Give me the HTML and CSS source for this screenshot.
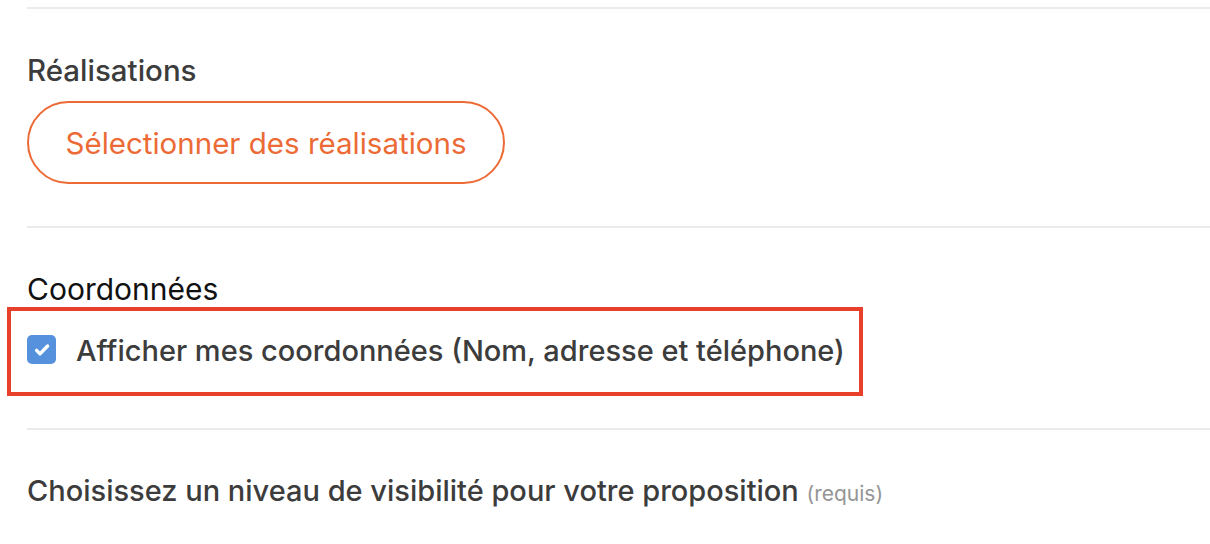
FILE: index.html
```html
<!DOCTYPE html>
<html lang="fr">
<head>
<meta charset="utf-8">
<link rel="stylesheet" href="styles.css">
</head>
<body>
<div class="form">
  <section class="section">
    <h2 class="title">Réalisations</h2>
    <button class="btn-outline" type="button">Sélectionner des réalisations</button>
  </section>
  <section class="section">
    <h2 class="title plain">Coordonnées</h2>
    <label class="check-row">
      <span class="checkbox">
        <svg viewBox="0 0 29 29" width="29" height="29"><path d="M9.6 15.4 L13 18.9 L20.6 11" fill="none" stroke="#fff" stroke-width="3.4" stroke-linecap="round" stroke-linejoin="round"/></svg>
      </span>
      <span class="check-label">Afficher mes coordonnées (Nom, adresse et téléphone)</span>
    </label>
  </section>
  <section class="section last">
    <h2 class="title">Choisissez un niveau de visibilité pour votre proposition <span class="req">(requis)</span></h2>
  </section>
</div>
</body>
</html>
```
FILE: styles.css
```css
*, *::before, *::after { box-sizing: border-box; }
html, body { margin: 0; padding: 0; background: #fff; }
body { font-family: "Inter", "Noto Sans", sans-serif; color: #3c3c3c; }
.form { padding-left: 27px; padding-top: 7px; }
.section { border-top: 2px solid #ebebeb; padding-top: 43px; padding-bottom: 42px; }
.section:nth-child(2) { padding-bottom: 59px; }
.title { margin: 0; font-size: 29.5px; font-weight: 500; line-height: 36px; color: #3c3c3c; }
.title.plain { font-size: 30px; font-weight: 400; color: #111; }
.section.last .title { font-size: 29px; }
.req { font-size: 21px; color: #959595; font-weight: 400; }
.btn-outline {
  display: block;
  margin-top: 13px;
  height: 83px; width: 478px;
  border: 2px solid #ec6a35; border-radius: 42px; background: #fff;
  color: #ec6a35; font-family: inherit; font-size: 29.5px; font-weight: 400;
  padding: 0; text-align: center; cursor: pointer;
}
.check-row { position: relative; display: flex; align-items: center; gap: 20px; margin-top: 22px; height: 40px; }
.check-row::after {
  content: ""; position: absolute; left: -20px; top: -22px; width: 856px; height: 89px;
  border: 4px solid #e8412b; pointer-events: none;
}
.checkbox { flex: none; width: 29px; height: 29px; border-radius: 5px; background: #5591dc; display: flex; }
.check-label { font-size: 29px; font-weight: 500; color: #3c3c3c; line-height: 36px; padding-top: 3px; }
```
